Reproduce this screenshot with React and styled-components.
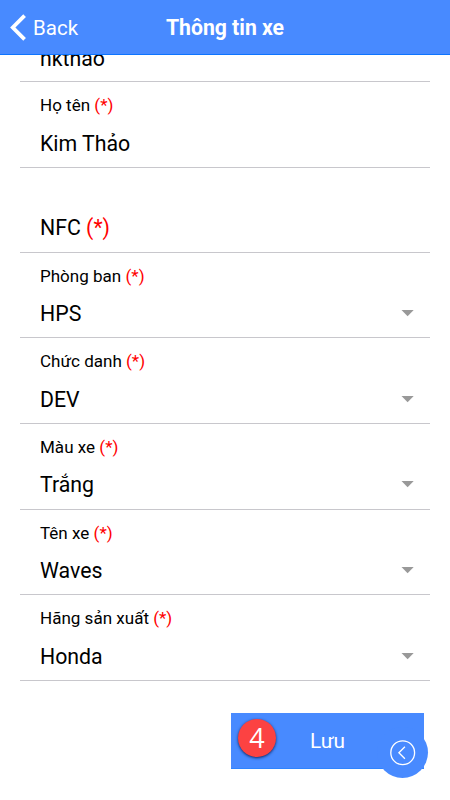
import React from "react";
import styled, { createGlobalStyle } from "styled-components";

const GlobalStyle = createGlobalStyle`
  * { box-sizing: border-box; }
  body { margin: 0; background: #fff; color: #000; font-family: Roboto, "Noto Sans", sans-serif; }
`;

const Screen = styled.div`
  width: 450px;
  height: 800px;
  overflow: hidden;
  display: flex;
  flex-direction: column;
  background: #fff;
`;

const Header = styled.header`
  flex: none;
  height: 55px;
  display: grid;
  grid-template-columns: 1fr auto 1fr;
  align-items: center;
  padding-left: 10px;
  padding-right: 10px;
  background: #488aff;
  border-bottom: 1px solid #0d74ff;
  color: #fff;
`;

const BackButton = styled.button`
  display: flex;
  align-items: center;
  gap: 7px;
  padding: 0;
  border: 0;
  background: none;
  color: #fff;
  font: 400 20.5px/24px Roboto, sans-serif;
`;

const BackText = styled.span`
  padding-top: 2px;
`;

const Title = styled.h1`
  margin: 0;
  padding-top: 2px;
  font-size: 21.2px;
  line-height: 24px;
  font-weight: 700;
`;

const Form = styled.main`
  flex: 1;
  min-height: 0;
  overflow: hidden;
  display: flex;
  flex-direction: column;
  padding: 0 20px;
`;

const Field = styled.section`
  flex: none;
  height: ${(p) => p.$height}px;
  display: flex;
  flex-direction: column;
  justify-content: flex-end;
  padding: 11px 16px ${(p) => p.$bottom ?? 9}px 20px;
  border-bottom: 1px solid #c8c7cc;
`;

const Label = styled.label`
  margin-bottom: auto;
  font-size: 17.05px;
  line-height: 24px;
`;

const ValueRow = styled.div`
  flex: none;
  display: flex;
  align-items: center;
  justify-content: space-between;
  font-size: 21.3px;
  line-height: 28px;
  height: 28px;
`;

const Required = styled.span`
  color: #f00;
`;

const Caret = styled.svg`
  width: 13px;
  height: 7px;
  margin-bottom: 2px;
  fill: #999;
`;

const Actions = styled.footer`
  flex: none;
  display: flex;
  justify-content: flex-end;
  padding: 32px 6px 0 0;
`;

const SaveButton = styled.button`
  position: relative;
  width: 193px;
  height: 56px;
  padding: 0;
  border: 0;
  border-bottom: 1px solid #2e84ff;
  background: #488aff;
  color: #fff;
  font: 400 20.8px/24px Roboto, sans-serif;
`;

const StepBadge = styled.span`
  position: absolute;
  left: 7px;
  top: 6px;
  width: 38px;
  height: 38px;
  border-radius: 50%;
  display: flex;
  align-items: center;
  justify-content: center;
  background: #fc4242;
  box-shadow: 0 1px 3px rgba(0, 20, 70, 0.85);
  font: 400 27px/38px "Open Sans", sans-serif;
`;

const FloatingToggle = styled.span`
  position: absolute;
  right: -4px;
  bottom: -10px;
  width: 51px;
  height: 51px;
  border-radius: 50%;
  display: flex;
  align-items: center;
  justify-content: center;
  background: #488aff;
`;

const fields = [
  { value: "nkthảo", height: 27, bottom: 8 },
  { label: "Họ tên", value: "Kim Thảo", height: 86 },
  { value: "NFC", required: true, height: 85, bottom: 10 },
  { label: "Phòng ban", value: "HPS", select: true, height: 85 },
  { label: "Chức danh", value: "DEV", select: true, height: 86 },
  { label: "Màu xe", value: "Trắng", select: true, height: 86, bottom: 10 },
  { label: "Tên xe", value: "Waves", select: true, height: 85 },
  { label: "Hãng sản xuất", value: "Honda", select: true, height: 86 },
];

export default function App() {
  return (
    <Screen>
      <GlobalStyle />
      <Header>
        <BackButton>
          <svg width="16" height="27" viewBox="0 0 16 27" fill="none" stroke="#fff" strokeWidth="3.8">
            <path d="M14.6 1.7 2.8 13.5l11.8 11.8" />
          </svg>
          <BackText>Back</BackText>
        </BackButton>
        <Title>Thông tin xe</Title>
      </Header>
      <Form>
        {fields.map((f) => (
          <Field key={f.value} $height={f.height} $bottom={f.bottom}>
            {f.label && (
              <Label>
                {f.label} <Required>(*)</Required>
              </Label>
            )}
            <ValueRow>
              <span>
                {f.value}
                {f.required && <Required> (*)</Required>}
              </span>
              {f.select && (
                <Caret viewBox="0 0 13 7">
                  <path d="M.5 0h12.2L6.6 6.2z" />
                </Caret>
              )}
            </ValueRow>
          </Field>
        ))}
        <Actions>
          <SaveButton>
            Lưu
            <StepBadge>4</StepBadge>
            <FloatingToggle>
              <svg width="26" height="26" viewBox="0 0 26 26" fill="none" stroke="#fff" strokeWidth="1.3">
                <circle cx="12.7" cy="12.7" r="11.9" />
                <path d="M14.9 6.7 8.9 12.7l6 6" />
              </svg>
            </FloatingToggle>
          </SaveButton>
        </Actions>
      </Form>
    </Screen>
  );
}
